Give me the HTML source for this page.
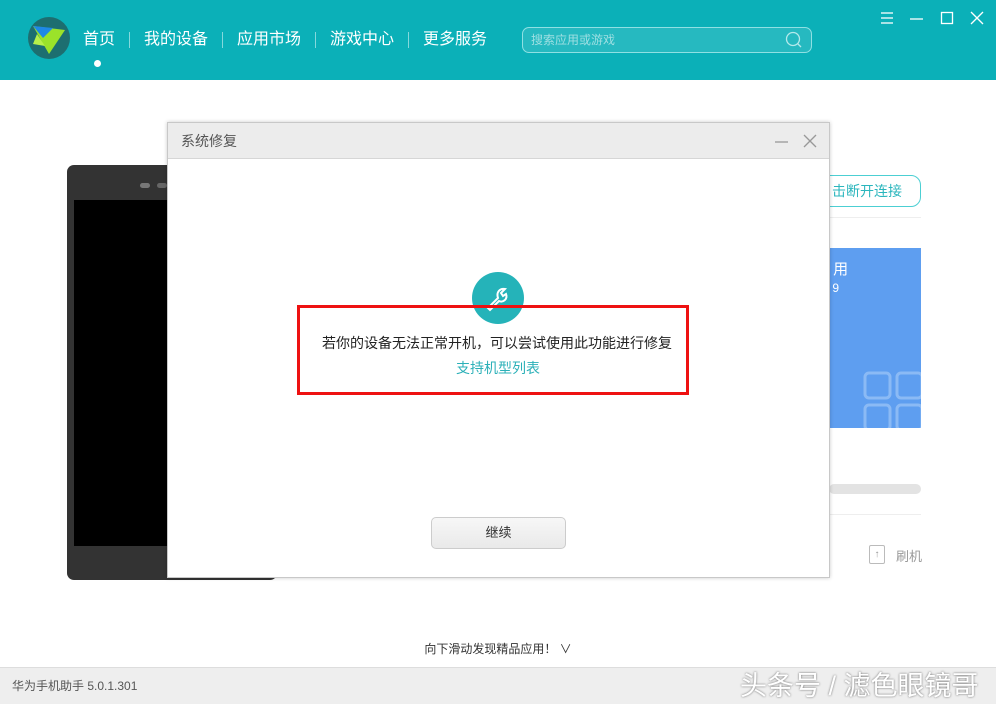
<!DOCTYPE html>
<html><head><meta charset="utf-8"><style>
*{margin:0;padding:0;box-sizing:border-box}
body{width:996px;height:704px;position:relative;overflow:hidden;background:#fff;font-family:"Liberation Sans","Noto Sans CJK SC",sans-serif}
.a{position:absolute}
.top{left:0;top:0;width:996px;height:80px;background:#0bb0b8}
.nav{top:29px;color:#fff;font-size:16px;line-height:22px}
.sep{top:32px;width:1px;height:16px;background:rgba(255,255,255,.5)}
</style></head><body>
<div class="a top"></div>
<svg class="a" style="left:27px;top:16px" width="44" height="44" viewBox="0 0 44 44">
<circle cx="22" cy="22" r="21" fill="#1d6e70"/>
<polygon points="6,10 38,14 22,38" fill="#9be22a"/>
<polygon points="6,10 26,12 16,22" fill="#1e88e5"/>
<polygon points="10,18 18,30 6,28" fill="#b7f04a"/>
</svg>
<div class="a nav" style="left:83px">首页</div>
<div class="a" style="left:94px;top:60px;width:7px;height:7px;border-radius:50%;background:#fff"></div>
<div class="a sep" style="left:129px"></div>
<div class="a nav" style="left:144px">我的设备</div>
<div class="a sep" style="left:222px"></div>
<div class="a nav" style="left:237px">应用市场</div>
<div class="a sep" style="left:315px"></div>
<div class="a nav" style="left:330px">游戏中心</div>
<div class="a sep" style="left:408px"></div>
<div class="a nav" style="left:423px">更多服务</div>
<div class="a" style="left:522px;top:27px;width:290px;height:26px;border:1px solid #8fe0e3;border-radius:7px;background:#26b9c0;color:#9fdfe2;font-size:12px;line-height:24px;padding-left:8px">搜索应用或游戏</div>
<svg class="a" style="left:785px;top:31px" width="18" height="18"><circle cx="8" cy="8" r="6.5" fill="none" stroke="#b5e9eb" stroke-width="1.3"/><line x1="12.5" y1="12.5" x2="16" y2="16" stroke="#b5e9eb" stroke-width="1.3"/></svg>
<svg class="a" style="left:878px;top:10px" width="110" height="18" stroke="#fff" stroke-width="1.3" fill="none">
<line x1="3" y1="3" x2="15" y2="3"/><line x1="3" y1="8" x2="15" y2="8"/><line x1="3" y1="13" x2="15" y2="13"/>
<line x1="32" y1="9" x2="45" y2="9"/>
<rect x="63.5" y="2.5" width="11" height="11"/>
<line x1="93" y1="2" x2="105" y2="14"/><line x1="105" y1="2" x2="93" y2="14"/>
</svg>

<div class="a" style="left:67px;top:165px;width:210px;height:415px;background:#333;border-radius:7px"></div>
<div class="a" style="left:140px;top:183px;width:10px;height:5px;border-radius:3px;background:#777"></div>
<div class="a" style="left:157px;top:183px;width:10px;height:5px;border-radius:3px;background:#666"></div>
<div class="a" style="left:74px;top:200px;width:200px;height:346px;background:#000"></div>

<div class="a" style="left:800px;top:175px;width:121px;height:32px;border:1px solid #4ccfd3;border-radius:10px;color:#2bb6bd;font-size:14px;line-height:30px;text-align:right;padding-right:18px">击断开连接</div>
<div class="a" style="left:829px;top:217px;width:92px;height:1px;background:#eee"></div>
<div class="a" style="left:829px;top:248px;width:92px;height:180px;background:#5e9ef0;color:#fff;font-size:15px;padding:10px 0 0 0">&nbsp;用<br><span style="font-size:12px">&nbsp;9</span></div>
<svg class="a" style="left:862px;top:370px" width="59" height="58" fill="none" stroke="#8bbaf5" stroke-width="3"><rect x="3" y="3" width="25" height="25" rx="4"/><rect x="35" y="3" width="25" height="25" rx="4"/><rect x="3" y="35" width="25" height="25" rx="4"/><rect x="35" y="35" width="25" height="25" rx="4"/></svg>
<div class="a" style="left:829px;top:484px;width:92px;height:10px;border-radius:5px;background:#e3e3e3"></div>
<div class="a" style="left:829px;top:514px;width:92px;height:1px;background:#eee"></div>
<div class="a" style="left:869px;top:545px;width:16px;height:19px;border:1px solid #bbb;border-radius:2px;color:#999;font-size:10px;text-align:center;line-height:17px">↑</div>
<div class="a" style="left:896px;top:546px;color:#999;font-size:13px">刷机</div>

<div class="a" style="left:167px;top:122px;width:663px;height:456px;background:#fff;border:1px solid #c8c8c8;box-shadow:0 0 4px rgba(0,0,0,.2)"></div>
<div class="a" style="left:168px;top:123px;width:661px;height:36px;background:#ececec;border-bottom:1px solid #d6d6d6;color:#555;font-size:14px;line-height:36px;padding-left:13px">系统修复</div>
<svg class="a" style="left:772px;top:132px" width="50" height="18" stroke="#999" stroke-width="1.3"><line x1="3" y1="10" x2="16" y2="10"/><line x1="32" y1="3" x2="44" y2="15"/><line x1="44" y1="3" x2="32" y2="15"/></svg>
<div class="a" style="left:472px;top:272px;width:52px;height:52px;border-radius:50%;background:#25b3b9"></div>
<svg class="a" style="left:472px;top:272px" width="52" height="52" fill="none" stroke="#fff" stroke-width="2"><path d="M16 36 L26 26 C24 20 28 16 33 17 L29 21 L31 24 L34 22 C36 27 31 31 27 29 L18 38 Z"/></svg>
<div class="a" style="left:297px;top:305px;width:392px;height:90px;border:3px solid #e11"></div>
<div class="a" style="left:301px;top:333px;width:392px;text-align:center;font-size:14px;color:#222">若你的设备无法正常开机，可以尝试使用此功能进行修复</div>
<div class="a" style="left:297px;top:358px;width:402px;text-align:center;font-size:14px;color:#2bb0b8">支持机型列表</div>
<div class="a" style="left:431px;top:517px;width:135px;height:32px;border:1px solid #ccc;border-radius:5px;background:linear-gradient(#f7f7f7,#e9e9e9);text-align:center;line-height:30px;font-size:13px;color:#333">继续</div>

<div class="a" style="left:0;top:640px;width:996px;text-align:center;font-size:12px;color:#333">向下滑动发现精品应用！ ∨</div>
<div class="a" style="left:0;top:667px;width:996px;height:37px;background:#eee;border-top:1px solid #ddd"></div>
<div class="a" style="left:12px;top:677px;font-size:12px;color:#555">华为手机助手 5.0.1.301</div>
<div class="a" style="left:740px;top:664px;font-size:27px;color:#fff;text-shadow:0 0 2px #666">头条号 / 滤色眼镜哥</div>
</body></html>
